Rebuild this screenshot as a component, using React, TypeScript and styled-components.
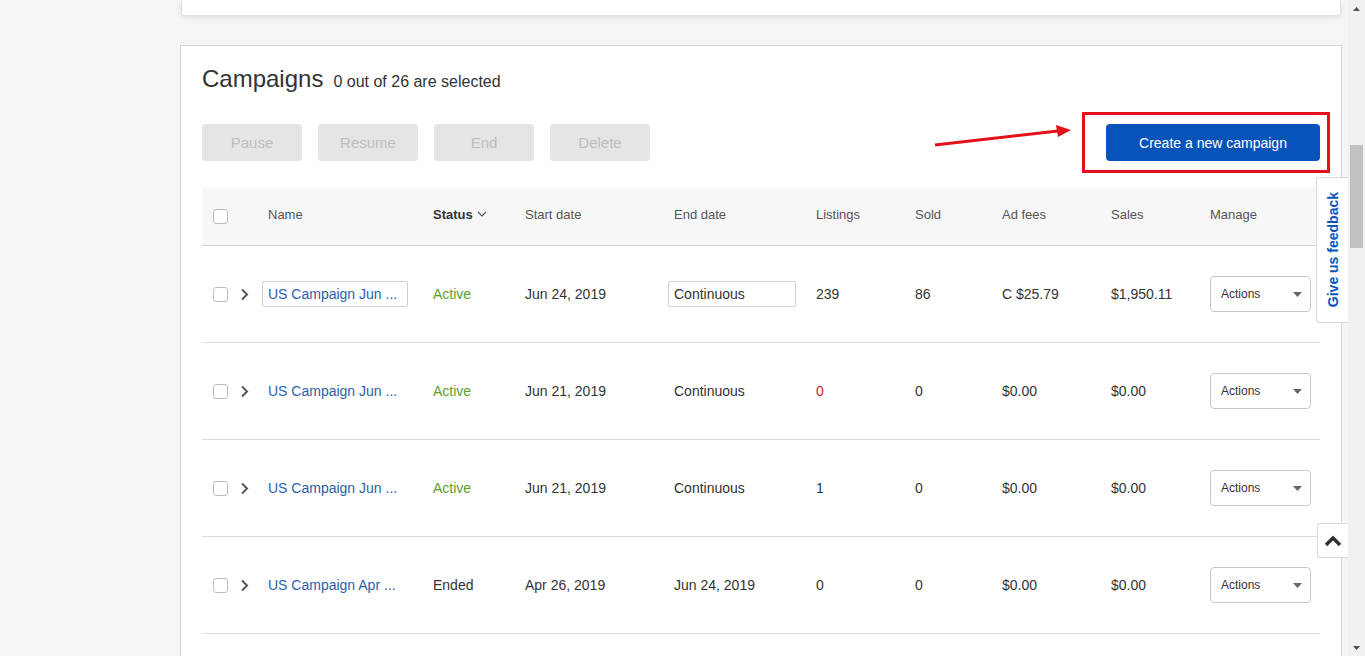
import React from 'react';
import styled, { createGlobalStyle } from 'styled-components';

const GlobalStyle = createGlobalStyle`
  html, body {
    margin: 0;
    padding: 0;
    height: 656px;
    overflow: hidden;
    background: #f5f5f5;
    font-family: "Liberation Sans", Arial, sans-serif;
    color: #333;
  }
`;

const Page = styled.div`
  display: flex;
  height: 656px;
  overflow: hidden;
`;

const Main = styled.div`
  flex: 1;
  padding: 0 6px 0 180px;
  display: flex;
  flex-direction: column;
  gap: 29px;
`;

const TopCard = styled.div`
  flex-shrink: 0;
  height: 15px;
  margin: 0 1px;
  background: #fff;
  border: 1px solid #e2e2e2;
  border-top: none;
  border-radius: 0 0 3px 3px;
  box-shadow: 0 2px 4px rgba(0, 0, 0, 0.08);
`;

const Card = styled.section`
  flex: 1 0 auto;
  background: #fff;
  border: 1px solid #d6d6d6;
  padding: 19px 21px 60px;
`;

const TitleRow = styled.div`
  display: flex;
  align-items: baseline;
  gap: 10px;
  height: 30px;
`;

const Title = styled.h2`
  margin: 0;
  font-size: 24px;
  font-weight: normal;
  color: #333;
`;

const Count = styled.span`
  font-size: 16px;
  color: #333;
`;

const Toolbar = styled.div`
  display: flex;
  justify-content: space-between;
  align-items: center;
  margin-top: 29px;
  height: 37px;
`;

const ButtonGroup = styled.div`
  display: flex;
  gap: 16px;
`;

const GhostButton = styled.button`
  width: 100px;
  height: 37px;
  border: none;
  border-radius: 3px;
  background: #e5e5e5;
  color: #bdbdbd;
  font-family: inherit;
  font-size: 15px;
`;

const CreateWrap = styled.div`
  position: relative;
`;

const PrimaryButton = styled.button`
  width: 214px;
  height: 37px;
  border: none;
  border-radius: 4px;
  background: #0654ba;
  color: #fff;
  font-family: inherit;
  font-size: 14px;
`;

const Highlight = styled.div`
  position: absolute;
  left: -24px;
  right: -10px;
  top: -12px;
  bottom: -12px;
  border: 3px solid #e4101a;
  pointer-events: none;
`;

const Arrow = styled.svg`
  position: absolute;
  left: -172px;
  top: -6px;
`;

const Table = styled.div`
  margin-top: 26px;
`;

const columns = '60px 171px 92px 143px 148px 99px 87px 109px 99px 110px';

const HeaderRow = styled.div`
  display: grid;
  grid-template-columns: ${columns};
  align-items: center;
  height: 58px;
  background: #f7f7f7;
  border-bottom: 1px solid #d4d4d4;
  font-size: 13px;
  color: #555;
`;

const HeaderCell = styled.div<{ $inset?: boolean; $bold?: boolean }>`
  padding-left: ${(p) => (p.$inset ? '6px' : '0')};
  font-weight: ${(p) => (p.$bold ? 'bold' : 'normal')};
  color: ${(p) => (p.$bold ? '#333' : '#555')};
  display: flex;
  align-items: center;
  gap: 4px;
  margin-top: -4px;
`;

const Row = styled.div`
  display: grid;
  grid-template-columns: ${columns};
  align-items: center;
  height: 96px;
  border-bottom: 1px solid #dcdcdc;
  font-size: 14px;
  color: #333;
`;

const SelectCell = styled.div`
  display: flex;
  align-items: center;
  gap: 12px;
  padding-left: 11px;
`;

const Checkbox = styled.span`
  width: 15px;
  height: 15px;
  box-sizing: border-box;
  border: 1px solid #bdbdbd;
  border-radius: 3px;
  background: #fff;
  display: block;
`;

const FieldBox = styled.div<{ $outlined?: boolean; $width: number }>`
  width: ${(p) => p.$width}px;
  height: 26px;
  box-sizing: border-box;
  padding: 0 5px;
  display: flex;
  align-items: center;
  border: 1px solid ${(p) => (p.$outlined ? '#cfcfcf' : 'transparent')};
  border-radius: 2px;
  white-space: nowrap;
  overflow: hidden;
`;

const NameLink = styled.span`
  color: #2a5fae;
`;

const Status = styled.span<{ $active: boolean }>`
  color: ${(p) => (p.$active ? '#5c9e2e' : '#333')};
`;

const Num = styled.span<{ $alert?: boolean }>`
  color: ${(p) => (p.$alert ? '#d11a2a' : '#333')};
`;

const ActionsSelect = styled.div`
  width: 101px;
  height: 36px;
  box-sizing: border-box;
  border: 1px solid #c8c8c8;
  border-radius: 4px;
  display: flex;
  align-items: center;
  justify-content: space-between;
  padding: 0 8px 0 10px;
  font-size: 12px;
  color: #333;
  background: #fff;
`;

const Scrollbar = styled.div`
  width: 17px;
  background: #f1f1f1;
  display: flex;
  flex-direction: column;
  align-items: center;
`;

const ScrollArrow = styled.div`
  height: 17px;
  display: flex;
  align-items: center;
  justify-content: center;
`;

const Thumb = styled.div`
  width: 13px;
  height: 103px;
  margin-top: 128px;
  background: #c1c1c1;
`;

const ScrollSpacer = styled.div`
  flex: 1;
`;

const FeedbackTab = styled.button`
  position: fixed;
  right: 17px;
  top: 177px;
  width: 32px;
  height: 146px;
  padding: 0;
  background: #fff;
  border: 1px solid #dadada;
  border-right: none;
  border-radius: 4px 0 0 4px;
  display: flex;
  align-items: center;
  justify-content: center;
`;

const FeedbackText = styled.span`
  writing-mode: vertical-rl;
  transform: rotate(180deg);
  font-family: "Liberation Sans", Arial, sans-serif;
  font-weight: bold;
  font-size: 14px;
  color: #0654ba;
  white-space: nowrap;
`;

const BackToTop = styled.button`
  position: fixed;
  right: 17px;
  top: 523px;
  width: 31px;
  height: 35px;
  padding: 0;
  background: #fff;
  border: 1px solid #dadada;
  border-right: none;
  border-radius: 3px 0 0 3px;
  display: flex;
  align-items: center;
  justify-content: center;
`;

const ChevronRight = () => (
  <svg width="9" height="13" viewBox="0 0 9 13">
    <polyline points="2,1.5 7,6.5 2,11.5" fill="none" stroke="#555" strokeWidth="2" />
  </svg>
);

const ChevronDownThin = () => (
  <svg width="10" height="6" viewBox="0 0 10 6">
    <polyline points="1,1 5,5 9,1" fill="none" stroke="#555" strokeWidth="1.2" />
  </svg>
);

const Caret = () => (
  <svg width="9" height="5" viewBox="0 0 9 5">
    <polygon points="0,0 9,0 4.5,5" fill="#666" />
  </svg>
);

type Campaign = {
  name: string;
  status: string;
  start: string;
  end: string;
  listings: string;
  sold: string;
  fees: string;
  sales: string;
};

const campaigns: Campaign[] = [
  { name: 'US Campaign Jun ...', status: 'Active', start: 'Jun 24, 2019', end: 'Continuous', listings: '239', sold: '86', fees: 'C $25.79', sales: '$1,950.11' },
  { name: 'US Campaign Jun ...', status: 'Active', start: 'Jun 21, 2019', end: 'Continuous', listings: '0', sold: '0', fees: '$0.00', sales: '$0.00' },
  { name: 'US Campaign Jun ...', status: 'Active', start: 'Jun 21, 2019', end: 'Continuous', listings: '1', sold: '0', fees: '$0.00', sales: '$0.00' },
  { name: 'US Campaign Apr ...', status: 'Ended', start: 'Apr 26, 2019', end: 'Jun 24, 2019', listings: '0', sold: '0', fees: '$0.00', sales: '$0.00' },
];

export default function App() {
  return (
    <Page>
      <GlobalStyle />
      <Main>
        <TopCard />
        <Card>
          <TitleRow>
            <Title>Campaigns</Title>
            <Count>0 out of 26 are selected</Count>
          </TitleRow>
          <Toolbar>
            <ButtonGroup>
              {['Pause', 'Resume', 'End', 'Delete'].map((label) => (
                <GhostButton key={label} disabled>
                  {label}
                </GhostButton>
              ))}
            </ButtonGroup>
            <CreateWrap>
              <Arrow width="140" height="30" viewBox="0 0 140 30">
                <line x1="1" y1="27" x2="124" y2="13" stroke="#e4101a" strokeWidth="3" />
                <polygon points="137,12 122,7 124,19" fill="#e4101a" />
              </Arrow>
              <Highlight />
              <PrimaryButton>Create a new campaign</PrimaryButton>
            </CreateWrap>
          </Toolbar>
          <Table>
            <HeaderRow>
              <SelectCell>
                <Checkbox />
              </SelectCell>
              <HeaderCell $inset>Name</HeaderCell>
              <HeaderCell $bold>
                Status <ChevronDownThin />
              </HeaderCell>
              <HeaderCell>Start date</HeaderCell>
              <HeaderCell $inset>End date</HeaderCell>
              <HeaderCell>Listings</HeaderCell>
              <HeaderCell>Sold</HeaderCell>
              <HeaderCell>Ad fees</HeaderCell>
              <HeaderCell>Sales</HeaderCell>
              <HeaderCell>Manage</HeaderCell>
            </HeaderRow>
            {campaigns.map((c, i) => (
              <Row key={i}>
                <SelectCell>
                  <Checkbox />
                  <ChevronRight />
                </SelectCell>
                <div>
                  <FieldBox $width={146} $outlined={i === 0}>
                    <NameLink>{c.name}</NameLink>
                  </FieldBox>
                </div>
                <Status $active={c.status === 'Active'}>{c.status}</Status>
                <span>{c.start}</span>
                <div>
                  <FieldBox $width={128} $outlined={i === 0}>
                    {c.end}
                  </FieldBox>
                </div>
                <Num $alert={c.listings === '0' && c.status === 'Active'}>{c.listings}</Num>
                <Num>{c.sold}</Num>
                <span>{c.fees}</span>
                <span>{c.sales}</span>
                <ActionsSelect>
                  Actions
                  <Caret />
                </ActionsSelect>
              </Row>
            ))}
          </Table>
        </Card>
      </Main>
      <Scrollbar>
        <ScrollArrow>
          <svg width="7" height="4" viewBox="0 0 7 4">
            <polygon points="0,4 7,4 3.5,0" fill="#505050" />
          </svg>
        </ScrollArrow>
        <Thumb />
        <ScrollSpacer />
        <ScrollArrow>
          <svg width="7" height="4" viewBox="0 0 7 4">
            <polygon points="0,0 7,0 3.5,4" fill="#505050" />
          </svg>
        </ScrollArrow>
      </Scrollbar>
      <FeedbackTab>
        <FeedbackText>Give us feedback</FeedbackText>
      </FeedbackTab>
      <BackToTop>
        <svg width="18" height="12" viewBox="0 0 18 12">
          <polyline points="2,10 9,3 16,10" fill="none" stroke="#333" strokeWidth="3.5" />
        </svg>
      </BackToTop>
    </Page>
  );
}
